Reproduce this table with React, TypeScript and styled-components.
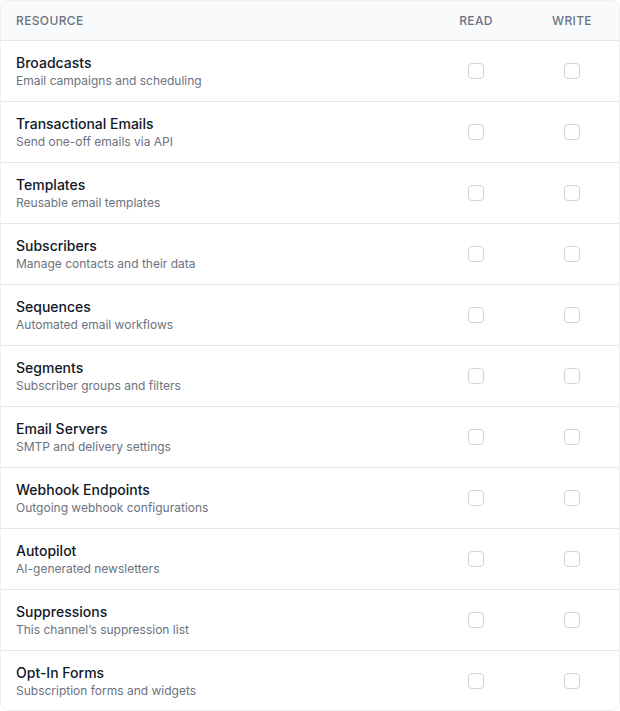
import React from "react";
import styled, { createGlobalStyle } from "styled-components";

const Global = createGlobalStyle`
  html, body { margin: 0; padding: 0; background: #ffffff; }
  body { font-family: Inter, "Noto Sans", "Liberation Sans", sans-serif; -webkit-font-smoothing: antialiased; }
  * { box-sizing: border-box; }
`;

const Card = styled.div`
  position: relative;
  width: 620px;
  border-radius: 8px;
  overflow: hidden;
  background: #ffffff;
  &::after {
    content: "";
    position: absolute;
    inset: 0;
    border: 1px solid #eef0f3;
    border-radius: 8px;
    pointer-events: none;
  }
`;

const Grid = styled.div`
  display: grid;
  grid-template-columns: 1fr 96px 96px;
`;

const HeaderRow = styled(Grid)`
  background: #f9fafb;
  border-bottom: 1px solid #e5e7eb;
  height: 41px;
  padding-top: 1px;
  align-items: center;
`;

const HeadCell = styled.div<{ $center?: boolean }>`
  font-size: 12px;
  line-height: 16px;
  font-weight: 500;
  letter-spacing: 0.03em;
  text-transform: uppercase;
  color: #6b7280;
  padding-left: ${(p) => (p.$center ? "0" : "16px")};
  text-align: ${(p) => (p.$center ? "center" : "left")};
`;

const Row = styled(Grid)`
  height: 61px;
  align-items: center;
  border-top: 1px solid #e5e7eb;
  &:first-of-type { border-top: none; height: 60px; }
`;

const Info = styled.div`
  padding-left: 16px;
  display: flex;
  flex-direction: column;
`;

const Name = styled.div`
  font-size: 14px;
  line-height: 20px;
  font-weight: 500;
  color: #111827;
`;

const Desc = styled.div`
  font-size: 12px;
  line-height: 16px;
  color: #6b7280;
`;

const BoxCell = styled.div`
  display: flex;
  justify-content: center;
`;

const Check = styled.input.attrs({ type: "checkbox" })`
  appearance: none;
  -webkit-appearance: none;
  margin: 0;
  width: 16px;
  height: 16px;
  border: 1px solid #d1d5db;
  border-radius: 4px;
  background: #ffffff;
`;

const resources = [
  ["Broadcasts", "Email campaigns and scheduling"],
  ["Transactional Emails", "Send one-off emails via API"],
  ["Templates", "Reusable email templates"],
  ["Subscribers", "Manage contacts and their data"],
  ["Sequences", "Automated email workflows"],
  ["Segments", "Subscriber groups and filters"],
  ["Email Servers", "SMTP and delivery settings"],
  ["Webhook Endpoints", "Outgoing webhook configurations"],
  ["Autopilot", "AI-generated newsletters"],
  ["Suppressions", "This channel\u2019s suppression list"],
  ["Opt-In Forms", "Subscription forms and widgets"],
];

export default function App() {
  return (
    <>
      <Global />
      <Card>
        <HeaderRow>
          <HeadCell>Resource</HeadCell>
          <HeadCell $center>Read</HeadCell>
          <HeadCell $center>Write</HeadCell>
        </HeaderRow>
        <div>
          {resources.map(([name, desc]) => (
            <Row key={name}>
              <Info>
                <Name>{name}</Name>
                <Desc>{desc}</Desc>
              </Info>
              <BoxCell><Check aria-label={`${name} read`} /></BoxCell>
              <BoxCell><Check aria-label={`${name} write`} /></BoxCell>
            </Row>
          ))}
        </div>
      </Card>
    </>
  );
}
